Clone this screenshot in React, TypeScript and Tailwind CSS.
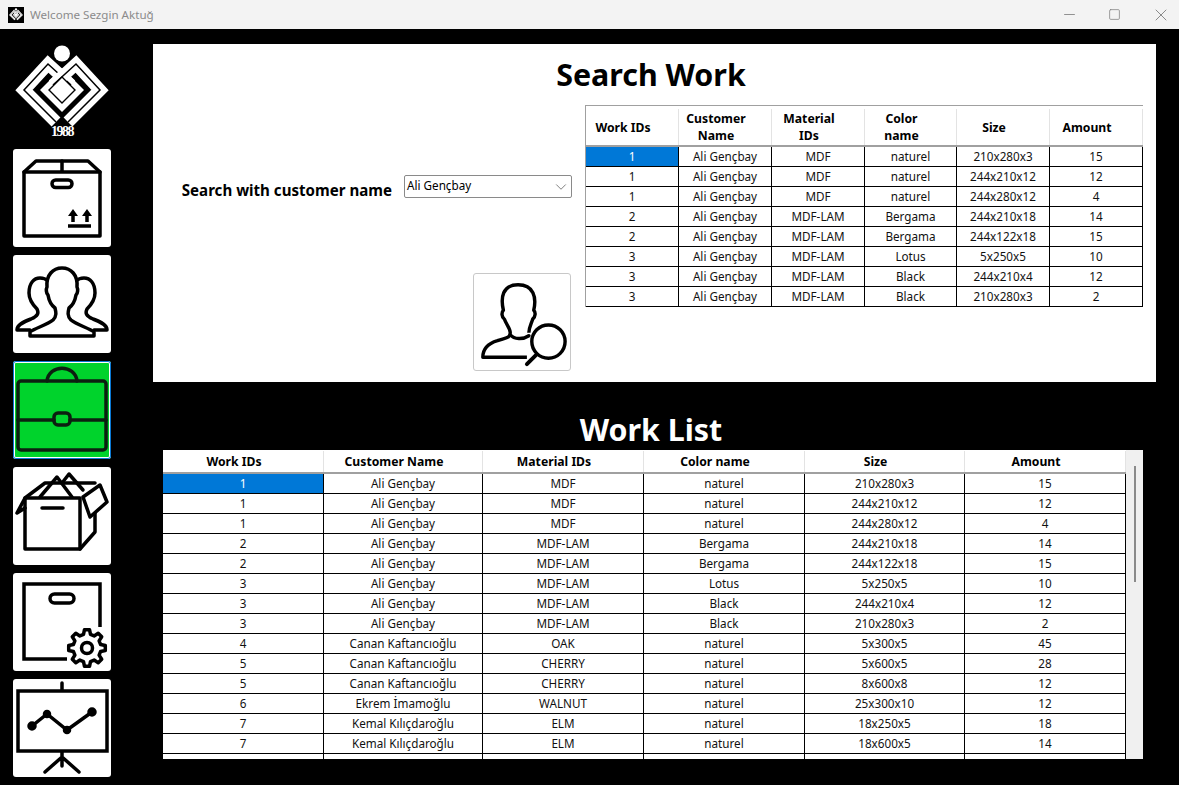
import { useState } from "react"
import type React from "react"
import { ChevronDown, Minus, Square, X } from "lucide-react"

type Row = [string, string, string, string, string, string]

const searchRows: Row[] = [
  ["1", "Ali Gençbay", "MDF", "naturel", "210x280x3", "15"],
  ["1", "Ali Gençbay", "MDF", "naturel", "244x210x12", "12"],
  ["1", "Ali Gençbay", "MDF", "naturel", "244x280x12", "4"],
  ["2", "Ali Gençbay", "MDF-LAM", "Bergama", "244x210x18", "14"],
  ["2", "Ali Gençbay", "MDF-LAM", "Bergama", "244x122x18", "15"],
  ["3", "Ali Gençbay", "MDF-LAM", "Lotus", "5x250x5", "10"],
  ["3", "Ali Gençbay", "MDF-LAM", "Black", "244x210x4", "12"],
  ["3", "Ali Gençbay", "MDF-LAM", "Black", "210x280x3", "2"],
]

const workRows: Row[] = [
  ...searchRows,
  ["4", "Canan Kaftancıoğlu", "OAK", "naturel", "5x300x5", "45"],
  ["5", "Canan Kaftancıoğlu", "CHERRY", "naturel", "5x600x5", "28"],
  ["5", "Canan Kaftancıoğlu", "CHERRY", "naturel", "8x600x8", "12"],
  ["6", "Ekrem İmamoğlu", "WALNUT", "naturel", "25x300x10", "12"],
  ["7", "Kemal Kılıçdaroğlu", "ELM", "naturel", "18x250x5", "18"],
  ["7", "Kemal Kılıçdaroğlu", "ELM", "naturel", "18x600x5", "14"],
  ["", "", "", "", "", ""],
]

// outline of a toothed wheel, used by the box + gear button
function gearPath(cx: number, cy: number, outer: number, inner: number, teeth: number) {
  const pts: string[] = []
  const step = (Math.PI * 2) / teeth
  for (let i = 0; i < teeth; i++) {
    const a = i * step - Math.PI / 2
    const at = (r: number, d: number) =>
      `${(cx + r * Math.cos(a + d * step)).toFixed(1)} ${(cy + r * Math.sin(a + d * step)).toFixed(1)}`
    pts.push(at(inner, -0.32), at(outer, -0.17), at(outer, 0.17), at(inner, 0.32))
  }
  return `M${pts.join(" L")} Z`
}

function Logo({ className }: { className?: string }) {
  const left = "M41 78 L9 46 L33 20 L56 41"
  const right = "M53 78 L85 46 L61 20 L38 41"
  return (
    <svg viewBox="0 0 94 94" className={className} fill="none" strokeLinejoin="miter">
      <circle cx="47" cy="9.5" r="8" fill="#fff" />
      <path d="M47 24 L69 46 L47 68 L25 46 Z" fill="#fff" />
      <path d={left} stroke="#fff" strokeWidth="12.5" />
      <path d={left} stroke="#000" strokeWidth="1.5" />
      <path d={right} stroke="#fff" strokeWidth="12.5" />
      <path d={right} stroke="#000" strokeWidth="1.5" />
      <path d="M47 33 L60 46 L47 59 L34 46 Z" fill="#fff" stroke="#000" strokeWidth="1.4" />
    </svg>
  )
}

function BoxUpIcon() {
  return (
    <svg viewBox="0 0 98 98" className="h-full w-full" fill="none" stroke="#000" strokeWidth="3.5" strokeLinejoin="round" strokeLinecap="round">
      <path d="M11 23 L23 12 H75 L87 23 V87 H11 Z" />
      <path d="M11 23 H87 M49 12 V23" />
      <rect x="39" y="31" width="20" height="7.5" rx="3.7" />
      <path d="M60 66 V73 M74 66 V73" strokeLinecap="butt" />
      <path d="M55 67 L60 60 L65 67 Z M69 67 L74 60 L79 67 Z" fill="#000" stroke="none" />
      <path d="M55 77 H78" strokeLinecap="butt" />
    </svg>
  )
}

function PeopleIcon() {
  const side = "M17 75 H4 C4 70 10 67 18 64 C25 61 26 58 24 54 C19 49 16 44 16 38 C16 28 21 23 27 23 C30 23 33 24 35 26"
  return (
    <svg viewBox="0 0 98 98" className="h-full w-full" fill="none" stroke="#000" strokeWidth="3.5" strokeLinejoin="round" strokeLinecap="round">
      <path d={side} />
      <path d={side} transform="translate(98 0) scale(-1 1)" />
      <path
        d="M17 81 V77 C22 73 34 70 40 65 C44 61 43 57 42 53 C38 50 36 46 35 40 C33 38 33 34 34 32 C33 20 40 13 49 13 C58 13 65 20 64 32 C65 34 65 38 63 40 C62 46 60 50 56 53 C55 57 54 61 58 65 C64 70 76 73 81 77 V81 Z"
        fill="#fff"
      />
    </svg>
  )
}

function CaseIcon() {
  return (
    <svg viewBox="0 0 98 98" className="h-full w-full" fill="none" stroke="#0c1f10" strokeWidth="3.5" strokeLinejoin="round" strokeLinecap="round">
      <path d="M34 20 C36 3 62 3 64 20" />
      <rect x="5" y="20" width="88" height="69" rx="3" />
      <path d="M5 59 H41 M57 59 H93" />
      <rect x="41" y="52" width="16" height="12" rx="4" />
    </svg>
  )
}

function OpenBoxIcon() {
  return (
    <svg viewBox="0 0 98 98" className="h-full w-full" fill="none" stroke="#000" strokeWidth="3.5" strokeLinejoin="round" strokeLinecap="round">
      <path d="M12 31 H67 V82 H12 Z" />
      <path d="M67 82 L82 65 V46" />
      <path d="M12 31 L4 46 L12 41 M12 31 L32 16 H82" />
      <path d="M27 30 L44 10 L59 30" />
      <path d="M49 16 L56 7 L70 23" />
      <path d="M70 30 L87 18 L94 35 L77 50 Z" fill="#fff" />
      <path d="M29 41 H50" />
    </svg>
  )
}

function BoxGearIcon() {
  return (
    <svg viewBox="0 0 98 98" className="h-full w-full" fill="none" stroke="#000" strokeWidth="3.5" strokeLinejoin="round" strokeLinecap="round">
      <path d="M54 86 H11 V11 H87 V54" strokeLinecap="butt" strokeLinejoin="miter" />
      <rect x="37" y="21" width="24" height="9" rx="4.5" />
      <path d={gearPath(74, 75, 18.5, 14, 8)} />
      <circle cx="74" cy="75" r="5.5" />
    </svg>
  )
}

function BoardIcon() {
  return (
    <svg viewBox="0 0 98 98" className="h-full w-full" fill="none" stroke="#000" strokeWidth="3.5" strokeLinecap="round">
      <path d="M49 4 V11 M49 73 V87 M49 78 L32 93 M49 78 L66 93" />
      <rect x="5" y="12" width="89" height="60" strokeLinejoin="miter" strokeLinecap="butt" />
      <path d="M19 47 L34 35 L54 51 L79 33" />
      <circle cx="19" cy="47" r="3" fill="#000" />
      <circle cx="34" cy="35" r="2.5" fill="#000" />
      <circle cx="54" cy="51" r="2.5" fill="#000" />
      <circle cx="79" cy="33" r="3" fill="#000" />
    </svg>
  )
}

function UserSearchIcon() {
  return (
    <svg viewBox="0 0 98 98" className="h-full w-full" fill="none" stroke="#000" strokeWidth="3.5" strokeLinejoin="round" strokeLinecap="round">
      <path d="M54 85 H9 C9 76 14 71 24 68 C32 65 37 66 37 60 C37 55 33 52 31 46 C28 44 28 39 30 37 C27 24 29 11 45 11 C61 11 64 24 61 37 C63 39 63 43 60 46 C58 52 56 55 56 60" strokeLinecap="butt" />
      <path d="M37 62 C41 67 50 67 56 63" />
      <circle cx="76" cy="69" r="17" />
      <path d="M64 82 L54 92" strokeWidth="4" />
    </svg>
  )
}

function SideButton({ active, children }: { active?: boolean; children: React.ReactNode }) {
  return (
    <button
      className={
        active
          ? "h-[98px] w-[98px] rounded-[3px] bg-[#00d32c] shadow-[inset_0_0_0_1px_#0a78d4,inset_0_0_0_2px_#fff]"
          : "h-[98px] w-[98px] rounded-[3px] bg-white"
      }
    >
      {children}
    </button>
  )
}

function GridTable({
  columns,
  rows,
  template,
  headerClass,
}: {
  columns: string[]
  rows: Row[]
  template: string
  headerClass: string
}) {
  return (
    <div className="min-w-0 flex-1 overflow-hidden bg-white">
      <div className={`grid ${template} ${headerClass} border-b-2 border-[#a0a0a0] text-[12.2px] font-bold text-black`}>
        {columns.map((c) => (
          <div key={c} className="flex items-center justify-center whitespace-pre-line border-r border-[#e3e3e3] pr-[18px] text-center leading-[17px]">
            {c}
          </div>
        ))}
      </div>
      {rows.map((r, i) => (
        <div key={i} className={`grid ${template} h-5 border-b border-black text-[11.7px] text-[#111]`}>
          {r.map((cell, j) => (
            <div
              key={j}
              className={`flex items-center justify-center border-r border-black leading-none ${
                i === 0 && j === 0 ? "bg-[#0078d7] text-white" : ""
              }`}
            >
              {cell}
            </div>
          ))}
        </div>
      ))}
    </div>
  )
}

export default function App() {
  const [customer] = useState("Ali Gençbay")

  return (
    <div className="flex h-[785px] w-[1179px] flex-col overflow-hidden bg-black font-['Noto_Sans','Open_Sans',sans-serif]">
      {/* Title bar */}
      <header className="flex h-[29px] items-center bg-[#f3f3f3] pl-[8px]">
        <div className="mr-[6px] flex h-4 w-4 items-center justify-center bg-black">
          <Logo className="h-[14px] w-[14px]" />
        </div>
        <span className="text-[11.6px] text-[#8b8b8b]">Welcome Sezgin Aktuğ</span>
        <div className="flex-1" />
        <div className="flex items-center gap-[30px] pr-[8px] text-[#808080]">
          <Minus className="h-[17px] w-[17px]" strokeWidth={1.2} />
          <Square className="h-[13px] w-[13px]" strokeWidth={1.4} />
          <X className="h-[20px] w-[20px]" strokeWidth={1.1} />
        </div>
      </header>

      <div className="flex flex-1">
        {/* Sidebar */}
        <aside className="flex w-[153px] flex-col pl-[13px] pt-[15px]">
          <Logo className="ml-[2px] h-[94px] w-[94px]" />
          <div className="-mt-[12px] mb-[12px] ml-[2px] h-[11px] w-[94px] text-center font-['Liberation_Serif',serif] text-[14px] font-bold leading-[11px] tracking-[-1.5px] text-white">
            1988
          </div>
          <nav className="flex flex-col gap-2">
            <SideButton><BoxUpIcon /></SideButton>
            <SideButton><PeopleIcon /></SideButton>
            <SideButton active><CaseIcon /></SideButton>
            <SideButton><OpenBoxIcon /></SideButton>
            <SideButton><BoxGearIcon /></SideButton>
            <SideButton><BoardIcon /></SideButton>
          </nav>
        </aside>

        <main className="flex w-[1003px] flex-col pt-[15px]">
          {/* Search panel */}
          <section className="h-[338px] bg-white">
            <h1 className="h-[61px] pr-[7px] pt-[8px] text-center text-[30.4px] font-bold leading-[46px] text-black">Search Work</h1>
            <div className="flex">
              <div className="flex w-[432px] flex-col items-end pr-[13px]">
                <div className="mt-[70px] flex h-[23px] items-center">
                  <label className="mr-[12px] pt-[8px] text-[15.1px] font-bold text-black">Search with customer name</label>
                  <div className="flex h-[23px] w-[168px] items-center justify-between rounded-[2px] border border-[#8a8a8a] pb-[2px] pl-[2px] pr-[1px] text-[11.7px] text-black">
                    {customer}
                    <ChevronDown className="mt-[2px] h-[18px] w-[18px] text-[#555]" strokeWidth={1} />
                  </div>
                </div>
                <button className="mr-[1px] mt-[75px] h-[98px] w-[98px] rounded-[3px] border border-[#c8c8c8] bg-white">
                  <UserSearchIcon />
                </button>
              </div>
              <div className="mr-[13px] flex h-[202px] w-[558px] border-l border-t border-[#a0a0a0]">
                <GridTable
                  columns={["Work IDs", "Customer\nName", "Material\nIDs", "Color\nname", "Size", "Amount"]}
                  rows={searchRows}
                  template="grid-cols-[93px_93px_93px_92px_93px_93px]"
                  headerClass="h-[41px] pt-[3px]"
                />
              </div>
            </div>
          </section>

          {/* Work list */}
          <h2 className="mt-[25px] h-[43px] pr-[7px] text-center text-[30.4px] font-bold leading-[46px] text-white">Work List</h2>
          <div className="ml-[10px] flex h-[309px] w-[980px] overflow-hidden">
            <GridTable
              columns={["Work IDs", "Customer Name", "Material IDs", "Color name", "Size", "Amount"]}
              rows={workRows}
              template="grid-cols-[161px_159px_161px_161px_160px_161px]"
              headerClass="h-[24px] pt-[1px]"
            />
            <div className="w-[17px] bg-[#f0f0f0] pl-[8px] pt-[16px]">
              <div className="h-[116px] w-[2px] bg-[#8a8a8a]" />
            </div>
          </div>
        </main>
      </div>
    </div>
  )
}
